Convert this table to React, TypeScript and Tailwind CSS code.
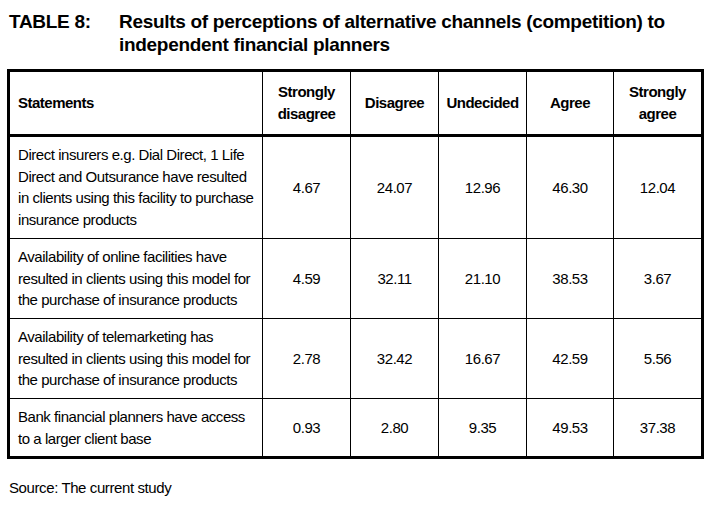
const rows = [
  {
    text: 'Direct insurers e.g. Dial Direct, 1 Life Direct and Outsurance have resulted in clients using this facility to purchase insurance products',
    values: ['4.67', '24.07', '12.96', '46.30', '12.04'],
  },
  {
    text: 'Availability of online facilities have resulted in clients using this model for the purchase of insurance products',
    values: ['4.59', '32.11', '21.10', '38.53', '3.67'],
  },
  {
    text: 'Availability of telemarketing has resulted in clients using this model for the purchase of insurance products',
    values: ['2.78', '32.42', '16.67', '42.59', '5.56'],
  },
  {
    text: 'Bank financial planners have access to a larger client base',
    values: ['0.93', '2.80', '9.35', '49.53', '37.38'],
  },
];

const headers = ['Strongly disagree', 'Disagree', 'Undecided', 'Agree', 'Strongly agree'];

export default function App() {
  return (
    <div className="min-h-screen w-[713px] bg-white text-black font-['Liberation_Sans',Arial,sans-serif]">
      {/* Title */}
      <div className="flex pl-[9px] pt-[10px] text-[19px] font-bold leading-[23px] tracking-[-0.3px]">
        <div className="w-[110px] shrink-0">TABLE 8:</div>
        <div className="w-[570px]">
          Results of perceptions of alternative channels (competition) to independent financial planners
        </div>
      </div>

      {/* Table */}
      <div className="ml-[7px] mt-[13px] w-[697px] border-[3px] border-black text-[15px] leading-[21.7px] tracking-[-0.45px]">
        <div className="grid grid-cols-[252px_88px_88px_88px_87px_1fr] border-b-[3px] border-black font-bold h-[65px] tracking-[-0.5px]">
          <div className="flex items-center px-[8px]">Statements</div>
          {headers.map((h) => (
            <div key={h} className="flex items-center justify-center border-l border-black text-center px-[6px]">
              {h}
            </div>
          ))}
        </div>
        {rows.map((row, i) => (
          <div
            key={i}
            className={`grid grid-cols-[252px_88px_88px_88px_87px_1fr] ${i < rows.length - 1 ? 'border-b border-black' : ''}`}
          >
            <div className="pl-[8px] pr-[2px] py-[7px]">{row.text}</div>
            {row.values.map((v, j) => (
              <div key={j} className="flex items-center justify-center border-l border-black">
                {v}
              </div>
            ))}
          </div>
        ))}
      </div>

      <div className="pl-[9px] pt-[18px] text-[15px] leading-[22px] tracking-[-0.4px]">Source: The current study</div>
    </div>
  );
}
